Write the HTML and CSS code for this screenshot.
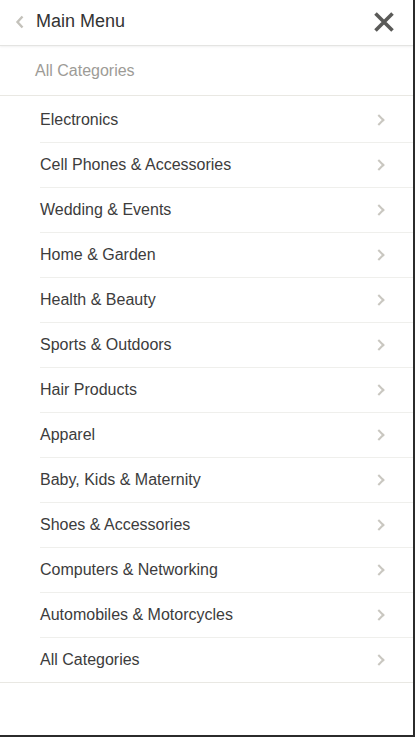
FILE: index.html
```html
<!DOCTYPE html>
<html>
<head>
<meta charset="utf-8">
<link rel="stylesheet" href="styles.css">
</head>
<body>
<div class="panel">
  <header class="header">
    <svg class="back" width="10" height="14" viewBox="0 0 10 14"><path d="M7.5 1.5 L2.5 7 L7.5 12.5" fill="none" stroke="#c4c2bb" stroke-width="2.4"/></svg>
    <span class="title">Main Menu</span>
    <svg class="close" width="22" height="22" viewBox="0 0 22 22"><path d="M2.5 2.5 L19.5 19.5 M19.5 2.5 L2.5 19.5" fill="none" stroke="#5a5a58" stroke-width="3.6"/></svg>
  </header>
  <div class="sub">All Categories</div>
  <ul class="list">
    <li class="item"><div class="row"><span>Electronics</span><i class="chev"></i></div></li>
    <li class="item"><div class="row"><span>Cell Phones &amp; Accessories</span><i class="chev"></i></div></li>
    <li class="item"><div class="row"><span>Wedding &amp; Events</span><i class="chev"></i></div></li>
    <li class="item"><div class="row"><span>Home &amp; Garden</span><i class="chev"></i></div></li>
    <li class="item"><div class="row"><span>Health &amp; Beauty</span><i class="chev"></i></div></li>
    <li class="item"><div class="row"><span>Sports &amp; Outdoors</span><i class="chev"></i></div></li>
    <li class="item"><div class="row"><span>Hair Products</span><i class="chev"></i></div></li>
    <li class="item"><div class="row"><span>Apparel</span><i class="chev"></i></div></li>
    <li class="item"><div class="row"><span>Baby, Kids &amp; Maternity</span><i class="chev"></i></div></li>
    <li class="item"><div class="row"><span>Shoes &amp; Accessories</span><i class="chev"></i></div></li>
    <li class="item"><div class="row"><span>Computers &amp; Networking</span><i class="chev"></i></div></li>
    <li class="item"><div class="row"><span>Automobiles &amp; Motorcycles</span><i class="chev"></i></div></li>
    <li class="item"><div class="row"><span>All Categories</span><i class="chev"></i></div></li>
  </ul>
</div>
</body>
</html>
```
FILE: styles.css
```css
html, body {
  margin: 0;
  padding: 0;
  background: #fff;
}
body {
  font-family: "Liberation Sans", Arial, sans-serif;
}
.panel {
  width: 415px;
  height: 737px;
  box-sizing: border-box;
  border-right: 2px solid #2b2b2b;
  border-bottom: 2px solid #2b2b2b;
  background: #fff;
  overflow: hidden;
}
.header {
  height: 45px;
  display: flex;
  align-items: center;
  border-bottom: 1px solid #e4e4e2;
  box-shadow: 0 1px 2px rgba(0, 0, 0, 0.06);
  position: relative;
}
.back {
  margin-left: 15px;
  margin-top: -1px;
}
.title {
  margin-left: 11px;
  font-size: 18px;
  color: #333;
  margin-top: -2px;
}
.close {
  margin-left: auto;
  margin-right: 18px;
  margin-top: -1px;
}
.sub {
  height: 50px;
  box-sizing: border-box;
  padding-left: 35px;
  display: flex;
  align-items: center;
  font-size: 16px;
  color: #9d9b96;
  border-bottom: 1px solid #e9e8e3;
}
.list {
  list-style: none;
  margin: 0;
  padding: 2px 0 0;
  border-bottom: 1px solid #e9e8e3;
}
.item {
  padding-left: 40px;
}
.row {
  height: 44px;
  display: flex;
  align-items: center;
  border-bottom: 1px solid #efefec;
  font-size: 16px;
  color: #3c3c3c;
}
.item:last-child .row {
  border-bottom: none;
}
.chev {
  margin-left: auto;
  margin-right: 30px;
  width: 6px;
  height: 6px;
  border-top: 2px solid #c9c7c0;
  border-right: 2px solid #c9c7c0;
  transform: rotate(45deg);
}
```
